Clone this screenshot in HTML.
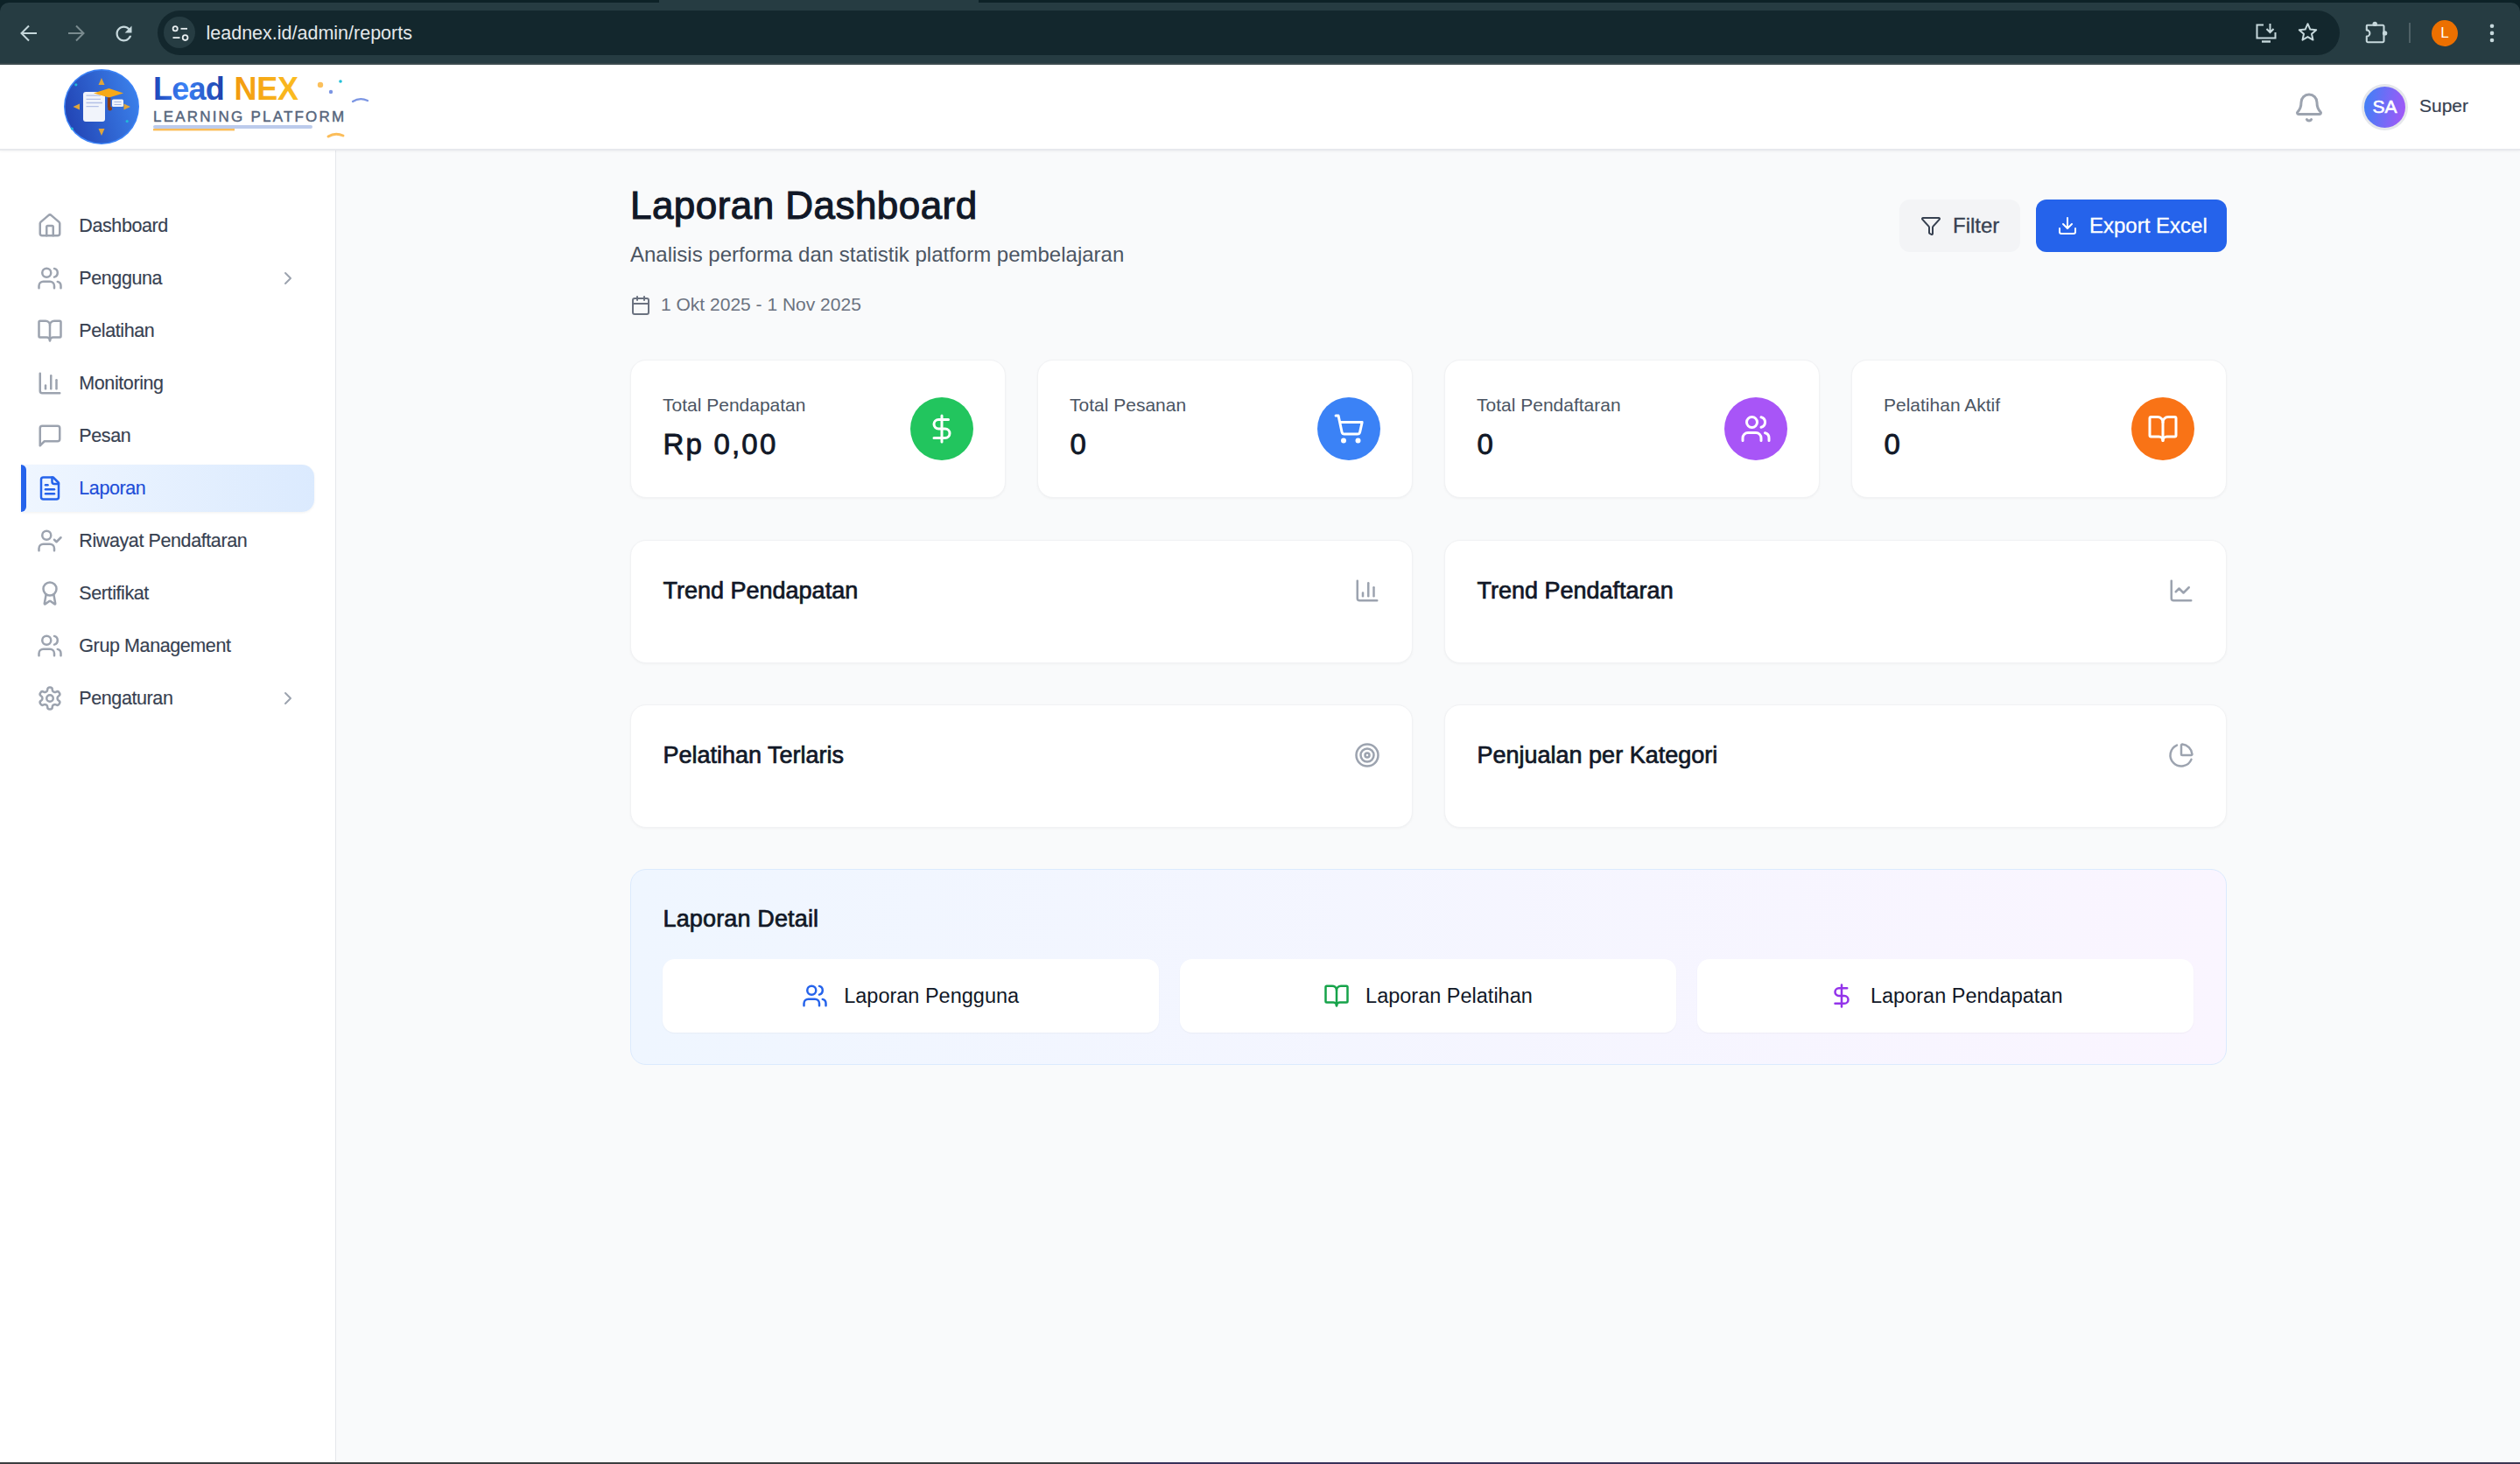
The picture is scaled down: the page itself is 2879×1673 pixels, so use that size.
<!DOCTYPE html>
<html><head><meta charset="utf-8">
<style>
*{box-sizing:border-box;margin:0;padding:0}
html,body{width:2879px;height:1673px;overflow:hidden}
body{position:relative;background:#f9fafb;font-family:"Liberation Sans",sans-serif;color:#111827}
.abs{position:absolute}
svg{display:block}
/* chrome */
#chrome{position:absolute;left:0;top:0;width:2879px;height:74px;background:#0d2227}
#toolbar{position:absolute;left:0;top:3px;width:2879px;height:69px;background:#263c42;border-radius:10px 10px 0 0}
#chline{position:absolute;left:0;top:72px;width:2879px;height:2px;background:#3a4a4e}
#tab{position:absolute;left:753px;top:0;width:365px;height:4px;background:#263c42}
#pill{position:absolute;left:180px;top:12px;width:2493px;height:51px;border-radius:25.5px;background:#13272d}
/* header */
#header{position:absolute;left:0;top:74px;width:2879px;height:98px;background:#fff;border-bottom:2px solid #e7e9ed;box-shadow:0 1px 3px rgba(0,0,0,0.05);z-index:2}
/* sidebar */
#side{position:absolute;left:0;top:172px;width:384px;height:1498px;background:#fff;border-right:1.5px solid #e5e7eb}
.nav{position:absolute;left:24px;width:335px;height:54px;font-size:21.5px;letter-spacing:-0.4px;color:#374151;-webkit-text-stroke:0.15px currentColor}
.nav .ic{position:absolute;left:17.5px;top:12px;width:30px;height:30px}
.nav .tx{position:absolute;left:66.3px;top:0;line-height:54px;white-space:nowrap}
.nav .chev{position:absolute;left:292.5px;top:15px;width:24px;height:24px}
.nav.act{background:linear-gradient(90deg,#eff6ff,#dbeafe);border-radius:0 14px 14px 0;color:#1d4ed8;box-shadow:0 1px 3px rgba(0,0,0,0.06)}
.nav.act:before{content:"";position:absolute;left:0;top:0;width:6px;height:54px;background:#2563eb;border-radius:0 6px 6px 0}
.card{position:absolute;background:#fff;border:1px solid #f1f2f4;border-radius:18px;box-shadow:0 1px 3px rgba(0,0,0,0.04)}
.btn{position:absolute;background:#fff;border-radius:14px;box-shadow:0 1px 2px rgba(0,0,0,0.04);display:flex;align-items:center;justify-content:center;font-size:23.5px;color:#111827;white-space:nowrap}
.btn svg{margin-right:18px}
#bottom{position:absolute;left:0;top:1670px;width:2879px;height:3px;background:linear-gradient(90deg,#3a3e3f 0,#3a3e3f 1240px,#36305a 1320px,#3b3652 100%);border-top:1px solid #fff}
</style></head>
<body>
<div id="chrome">
  <div id="tab"></div>
  <div id="toolbar"></div>
  <div id="chline"></div>
  <svg class="abs" style="left:20px;top:25px" width="26" height="26" viewBox="0 0 26 26"><path d="M22 13H6M13 4.5L4.5 13L13 21.5" fill="none" stroke="#c6d8dc" stroke-width="2"/></svg>
  <svg class="abs" style="left:74px;top:25px" width="26" height="26" viewBox="0 0 26 26"><path d="M4 13H20M13 4.5L21.5 13L13 21.5" fill="none" stroke="#7a8b8f" stroke-width="2"/></svg>
  <svg class="abs" style="left:127.5px;top:24.5px" width="27" height="27" viewBox="0 0 24 24"><path fill="#c6d8dc" d="M17.65 6.35C16.2 4.9 14.21 4 12 4c-4.42 0-7.99 3.58-7.99 8s3.57 8 7.99 8c3.73 0 6.84-2.55 7.73-6h-2.08c-.82 2.33-3.040 4-5.650 4-3.310 0-6-2.690-6-6s2.690-6 6-6c1.660 0 3.140.69 4.220 1.780L13 11h7V4l-2.35 2.35z"/></svg>
  <div id="pill"></div>
  <div class="abs" style="left:187px;top:19px;width:36px;height:36px;border-radius:18px;background:#263c42"></div>
  <svg class="abs" style="left:187px;top:19px" width="36" height="36" viewBox="0 0 36 36"><circle cx="13.2" cy="13.8" r="2.6" fill="none" stroke="#e8eef0" stroke-width="1.8"/><path d="M19.5 13.8H27" stroke="#e8eef0" stroke-width="1.8"/><path d="M10.5 24.1H18.5" stroke="#e8eef0" stroke-width="1.8"/><circle cx="24.6" cy="24.1" r="2.9" fill="none" stroke="#e8eef0" stroke-width="1.8"/></svg>
  <div class="abs" style="left:235.5px;top:24px;font-size:21.5px;line-height:28px;color:#e4e8ea;white-space:nowrap">leadnex.id/admin/reports</div>
  <svg class="abs" style="left:2574px;top:24px" width="30" height="28" viewBox="0 0 30 28"><path d="M12 4.5H4.5V19.5H25.5V13" fill="none" stroke="#c6d8dc" stroke-width="2"/><path d="M10 23.5H20" stroke="#c6d8dc" stroke-width="2.4"/><path d="M19.5 3V13M15.5 9L19.5 13L23.5 9" fill="none" stroke="#c6d8dc" stroke-width="2"/></svg>
  <svg class="abs" style="left:2622px;top:23px" width="30" height="28" viewBox="0 0 30 28"><path d="M14.5 4.2L17.3 10.6L24.2 11.2L19 15.8L20.5 22.6L14.5 19.1L8.5 22.6L10 15.8L4.8 11.2L11.7 10.6Z" fill="none" stroke="#c6d8dc" stroke-width="2" stroke-linejoin="round"/></svg>
  <svg class="abs" style="left:2698px;top:22px" width="32" height="30" viewBox="0 0 32 30"><path d="M6.5 6.8H24.3A1.2 1.2 0 0 1 25.5 8V24.8A1.4 1.4 0 0 1 24.1 26.2H7.2A1.4 1.4 0 0 1 5.8 24.8V19.6A3.6 3.6 0 0 0 5.8 12.4V7.5A0.7 0.7 0 0 1 6.5 6.8Z" fill="none" stroke="#c6d8dc" stroke-width="2.1" stroke-linejoin="round"/><circle cx="15.2" cy="5.4" r="2.7" fill="#c6d8dc"/><circle cx="26.6" cy="15.9" r="2.7" fill="#c6d8dc"/></svg>
  <div class="abs" style="left:2752px;top:26px;width:2px;height:23px;background:#4e6166"></div>
  <div class="abs" style="left:2778px;top:23px;width:30px;height:30px;border-radius:50%;background:#ec7000;color:#fff;font-size:17px;line-height:30px;text-align:center">L</div>
  <svg class="abs" style="left:2840px;top:24px" width="14" height="28" viewBox="0 0 14 28"><circle cx="7" cy="5.8" r="2.3" fill="#c6d8dc"/><circle cx="7" cy="13.9" r="2.3" fill="#c6d8dc"/><circle cx="7" cy="22" r="2.3" fill="#c6d8dc"/></svg>
</div>
<div id="header">
  <svg class="abs" style="left:70px;top:3px" width="92" height="92" viewBox="0 0 92 92">
    <defs><linearGradient id="lg1" x1="0" y1="0.65" x2="1" y2="0.35"><stop offset="0" stop-color="#2244b4"/><stop offset="1" stop-color="#3b80ea"/></linearGradient></defs>
    <circle cx="46" cy="45" r="43" fill="#3b82f6"/>
    <circle cx="46" cy="45" r="41.5" fill="url(#lg1)"/>
    <path d="M46 12L42.5 20H49.5Z" fill="#e0a53a"/>
    <path d="M46 78L42.5 70H49.5Z" fill="#e0a53a"/>
    <path d="M13.5 45L21 41.5V48.5Z" fill="#e0a53a"/>
    <path d="M79 45L71.5 41.5V48.5Z" fill="#e0a53a"/>
    <rect x="25" y="28" width="25" height="34" rx="3" fill="#f1f4fb"/>
    <path d="M28.5 32.1H45M28.5 36.3H45M28.5 40.5H47M28.5 44.7H42.7" stroke="#b3c0e6" stroke-width="1.3"/>
    <path d="M37 29.5L54.5 24L71 29.5L54.5 34.5Z" fill="#f7a918"/>
    <path d="M54.6 34.5V46" stroke="#8a3c12" stroke-width="3.6"/><circle cx="55.6" cy="47.2" r="2.4" fill="#8a3c12"/>
    <rect x="58" y="36.5" width="13" height="8.5" rx="1.5" fill="#eef2fb"/>
    <path d="M60.5 39.5H68.5M60.5 42.5H68.5" stroke="#a9b9e2" stroke-width="1.2"/>
    <circle cx="16.8" cy="19.8" r="1.6" fill="#22b8d8"/>
    <circle cx="75.2" cy="61.6" r="1.6" fill="#22b8d8"/>
    <circle cx="12.3" cy="70" r="1.6" fill="#22b8d8"/>
  </svg>
  <svg class="abs" style="left:170px;top:0px" width="260" height="96" viewBox="0 0 260 96">
    <defs>
      <linearGradient id="lg2" x1="0" y1="0" x2="1" y2="0"><stop offset="0" stop-color="#1d44b8"/><stop offset="0.45" stop-color="#3b82f6"/><stop offset="1" stop-color="#1e3faa"/></linearGradient>
      <linearGradient id="lg3" x1="0" y1="0" x2="1" y2="0"><stop offset="0" stop-color="#f29a0e"/><stop offset="1" stop-color="#fbbd22"/></linearGradient>
    </defs>
    <text x="5" y="40" font-family="Liberation Sans" font-weight="bold" font-size="36" letter-spacing="-0.8" fill="url(#lg2)">Lead</text>
    <text x="97.5" y="40" font-family="Liberation Sans" font-weight="bold" font-size="36" letter-spacing="-0.3" fill="url(#lg3)">NEX</text>
    <text x="5" y="65" font-family="Liberation Sans" font-size="17" letter-spacing="2.2" fill="#56657c" stroke="#56657c" stroke-width="0.45">LEARNING PLATFORM</text>
    <rect x="5" y="69" width="182" height="4" rx="2" fill="#bccbec"/>
    <rect x="5" y="73" width="93" height="2.4" fill="#fbbd5a"/>
    <circle cx="196" cy="23" r="3.2" fill="#fbc05c"/>
    <circle cx="219" cy="19" r="1.8" fill="#22c0d8"/>
    <circle cx="208" cy="31" r="2.2" fill="#7b95e3"/>
    <path d="M233 42Q241 37 250 41" fill="none" stroke="#7b95e3" stroke-width="2.2" stroke-linecap="round"/>
    <path d="M205 82Q213 77 222 81" fill="none" stroke="#fbbd5a" stroke-width="3" stroke-linecap="round"/>
  </svg>
  <svg class="abs" style="left:2619.5px;top:30.5px" width="36" height="36" viewBox="0 0 24 24" fill="none" stroke="#9ca3af" stroke-width="2" stroke-linecap="round" stroke-linejoin="round"><path d="M10.268 21a2 2 0 0 0 3.464 0"/><path d="M3.262 15.326A1 1 0 0 0 4 17h16a1 1 0 0 0 .74-1.673C19.41 13.956 18 12.499 18 8A6 6 0 0 0 6 8c0 4.499-1.411 5.956-2.738 7.326"/></svg>
  <div class="abs" style="left:2698px;top:22px;width:53px;height:53px;border-radius:50%;background:#e5e7eb"></div>
  <div class="abs" style="left:2701px;top:25px;width:47px;height:47px;border-radius:50%;background:linear-gradient(100deg,#3b82f6,#a855f7);color:#fff;font-size:21px;-webkit-text-stroke:0.6px #fff;line-height:46px;text-align:center">SA</div>
  <div class="abs" style="left:2764px;top:32px;font-size:21px;line-height:30px;color:#374151;-webkit-text-stroke:0.2px #374151">Super</div>
</div>
<div id="side"></div>
<div class="nav" style="top:231px"><svg class="ic" viewBox="0 0 24 24" fill="none" stroke="#9ca3af" stroke-width="2" stroke-linecap="round" stroke-linejoin="round"><path d="M15 21v-8a1 1 0 0 0-1-1h-4a1 1 0 0 0-1 1v8"/><path d="M3 10a2 2 0 0 1 .709-1.528l7-5.999a2 2 0 0 1 2.582 0l7 5.999A2 2 0 0 1 21 10v9a2 2 0 0 1-2 2H5a2 2 0 0 1-2-2z"/></svg><div class="tx">Dashboard</div></div>
<div class="nav" style="top:291px"><svg class="ic" viewBox="0 0 24 24" fill="none" stroke="#9ca3af" stroke-width="2" stroke-linecap="round" stroke-linejoin="round"><path d="M16 21v-2a4 4 0 0 0-4-4H6a4 4 0 0 0-4 4v2"/><circle cx="9" cy="7" r="4"/><path d="M22 21v-2a4 4 0 0 0-3-3.87"/><path d="M16 3.13a4 4 0 0 1 0 7.75"/></svg><div class="tx">Pengguna</div><svg class="chev" viewBox="0 0 24 24" fill="none" stroke="#9ca3af" stroke-width="2" stroke-linecap="round" stroke-linejoin="round"><path d="m9 18 6-6-6-6"/></svg></div>
<div class="nav" style="top:351px"><svg class="ic" viewBox="0 0 24 24" fill="none" stroke="#9ca3af" stroke-width="2" stroke-linecap="round" stroke-linejoin="round"><path d="M12 7v14"/><path d="M3 18a1 1 0 0 1-1-1V4a1 1 0 0 1 1-1h5a4 4 0 0 1 4 4 4 4 0 0 1 4-4h5a1 1 0 0 1 1 1v13a1 1 0 0 1-1 1h-6a3 3 0 0 0-3 3 3 3 0 0 0-3-3z"/></svg><div class="tx">Pelatihan</div></div>
<div class="nav" style="top:411px"><svg class="ic" viewBox="0 0 24 24" fill="none" stroke="#9ca3af" stroke-width="2" stroke-linecap="round" stroke-linejoin="round"><path d="M3 3v16a2 2 0 0 0 2 2h16"/><path d="M18 17V9"/><path d="M13 17V5"/><path d="M8 17v-3"/></svg><div class="tx">Monitoring</div></div>
<div class="nav" style="top:471px"><svg class="ic" viewBox="0 0 24 24" fill="none" stroke="#9ca3af" stroke-width="2" stroke-linecap="round" stroke-linejoin="round"><path d="M21 15a2 2 0 0 1-2 2H7l-4 4V5a2 2 0 0 1 2-2h14a2 2 0 0 1 2 2z"/></svg><div class="tx">Pesan</div></div>
<div class="nav act" style="top:531px"><svg class="ic" viewBox="0 0 24 24" fill="none" stroke="#2563eb" stroke-width="2" stroke-linecap="round" stroke-linejoin="round"><path d="M15 2H6a2 2 0 0 0-2 2v16a2 2 0 0 0 2 2h12a2 2 0 0 0 2-2V7Z"/><path d="M14 2v4a2 2 0 0 0 2 2h4"/><path d="M10 9H8"/><path d="M16 13H8"/><path d="M16 17H8"/></svg><div class="tx">Laporan</div></div>
<div class="nav" style="top:591px"><svg class="ic" viewBox="0 0 24 24" fill="none" stroke="#9ca3af" stroke-width="2" stroke-linecap="round" stroke-linejoin="round"><path d="M16 21v-2a4 4 0 0 0-4-4H6a4 4 0 0 0-4 4v2"/><circle cx="9" cy="7" r="4"/><polyline points="16 11 18 13 22 9"/></svg><div class="tx">Riwayat Pendaftaran</div></div>
<div class="nav" style="top:651px"><svg class="ic" viewBox="0 0 24 24" fill="none" stroke="#9ca3af" stroke-width="2" stroke-linecap="round" stroke-linejoin="round"><path d="m15.477 12.89 1.515 8.526a.5.5 0 0 1-.81.47l-3.58-2.687a1 1 0 0 0-1.197 0l-3.586 2.686a.5.5 0 0 1-.81-.469l1.514-8.526"/><circle cx="12" cy="8" r="6"/></svg><div class="tx">Sertifikat</div></div>
<div class="nav" style="top:711px"><svg class="ic" viewBox="0 0 24 24" fill="none" stroke="#9ca3af" stroke-width="2" stroke-linecap="round" stroke-linejoin="round"><path d="M16 21v-2a4 4 0 0 0-4-4H6a4 4 0 0 0-4 4v2"/><circle cx="9" cy="7" r="4"/><path d="M22 21v-2a4 4 0 0 0-3-3.87"/><path d="M16 3.13a4 4 0 0 1 0 7.75"/></svg><div class="tx">Grup Management</div></div>
<div class="nav" style="top:771px"><svg class="ic" viewBox="0 0 24 24" fill="none" stroke="#9ca3af" stroke-width="2" stroke-linecap="round" stroke-linejoin="round"><path d="M12.22 2h-.44a2 2 0 0 0-2 2v.18a2 2 0 0 1-1 1.73l-.43.25a2 2 0 0 1-2 0l-.15-.08a2 2 0 0 0-2.73.73l-.22.38a2 2 0 0 0 .73 2.73l.15.1a2 2 0 0 1 1 1.72v.51a2 2 0 0 1-1 1.74l-.15.09a2 2 0 0 0-.73 2.73l.22.38a2 2 0 0 0 2.730.73l.15-.08a2 2 0 0 1 2 0l.43.25a2 2 0 0 1 1 1.73V20a2 2 0 0 0 2 2h.44a2 2 0 0 0 2-2v-.18a2 2 0 0 1 1-1.73l.43-.25a2 2 0 0 1 2 0l.15.08a2 2 0 0 0 2.73-.73l.22-.39a2 2 0 0 0-.73-2.73l-.15-.08a2 2 0 0 1-1-1.74v-.5a2 2 0 0 1 1-1.74l.15-.09a2 2 0 0 0 .73-2.73l-.22-.38a2 2 0 0 0-2.73-.73l-.15.08a2 2 0 0 1-2 0l-.43-.25a2 2 0 0 1-1-1.73V4a2 2 0 0 0-2-2z"/><circle cx="12" cy="12" r="3"/></svg><div class="tx">Pengaturan</div><svg class="chev" viewBox="0 0 24 24" fill="none" stroke="#9ca3af" stroke-width="2" stroke-linecap="round" stroke-linejoin="round"><path d="m9 18 6-6-6-6"/></svg></div>
<div id="main">
<div class="abs" style="left:720px;top:208.75px;font-size:44px;line-height:52px;letter-spacing:0.45px;-webkit-text-stroke:1.1px #111827;color:#111827;white-space:nowrap">Laporan Dashboard</div>
<div class="abs" style="left:720px;top:275.68px;font-size:24px;line-height:30px;color:#4b5563;white-space:nowrap">Analisis performa dan statistik platform pembelajaran</div>
<svg class="abs" style="left:720px;top:336.5px" width="24" height="24" viewBox="0 0 24 24" fill="none" stroke="#6b7280" stroke-width="2" stroke-linecap="round" stroke-linejoin="round"><path d="M8 2v4"/><path d="M16 2v4"/><rect width="18" height="18" x="3" y="4" rx="2"/><path d="M3 10h18"/></svg>
<div class="abs" style="left:755px;top:334.72px;font-size:21px;line-height:26px;color:#6b7280;white-space:nowrap">1 Okt 2025 - 1 Nov 2025</div>
<div class="abs" style="left:2170px;top:228px;width:138px;height:60px;border-radius:12px;background:#f3f4f6"></div>
<svg class="abs" style="left:2194px;top:245.5px" width="24" height="24" viewBox="0 0 24 24" fill="none" stroke="#374151" stroke-width="2" stroke-linecap="round" stroke-linejoin="round"><path d="M10 20a1 1 0 0 0 .553.895l2 1A1 1 0 0 0 14 21v-7a2 2 0 0 1 .517-1.341L21.74 4.67A1 1 0 0 0 21 3H3a1 1 0 0 0-.742 1.67l7.225 7.989A2 2 0 0 1 10 14z"/></svg>
<div class="abs" style="left:2231px;top:243.08px;font-size:24px;line-height:30px;-webkit-text-stroke:0.3px #374151;color:#374151;white-space:nowrap">Filter</div>
<div class="abs" style="left:2326px;top:228px;width:218px;height:60px;border-radius:12px;background:#2563eb"></div>
<svg class="abs" style="left:2350px;top:246px" width="24" height="24" viewBox="0 0 24 24" fill="none" stroke="#ffffff" stroke-width="2" stroke-linecap="round" stroke-linejoin="round"><path d="M21 15v4a2 2 0 0 1-2 2H5a2 2 0 0 1-2-2v-4"/><polyline points="7 10 12 15 17 10"/><line x1="12" x2="12" y1="15" y2="3"/></svg>
<div class="abs" style="left:2387px;top:243.08px;font-size:24px;line-height:30px;-webkit-text-stroke:0.3px #fff;color:#ffffff;white-space:nowrap">Export Excel</div>
<div class="card" style="left:720px;top:411px;width:428.5px;height:158px"></div>
<div class="abs" style="left:757px;top:447.72px;font-size:21px;line-height:30px;color:#4b5563;white-space:nowrap">Total Pendapatan</div>
<div class="abs" style="left:757.5px;top:480.57px;font-size:33px;line-height:54px;letter-spacing:2.2px;-webkit-text-stroke:0.85px #111827;color:#111827;white-space:nowrap">Rp 0,00</div>
<div class="abs" style="left:1040px;top:454px;width:72px;height:72px;border-radius:50%;background:#22c55e"></div>
<svg class="abs" style="left:1058px;top:472px" width="36" height="36" viewBox="0 0 24 24" fill="none" stroke="#ffffff" stroke-width="2" stroke-linecap="round" stroke-linejoin="round"><line x1="12" x2="12" y1="2" y2="22"/><path d="M17 5H9.5a3.5 3.5 0 0 0 0 7h5a3.5 3.5 0 0 1 0 7H6"/></svg>
<div class="card" style="left:1185px;top:411px;width:428.5px;height:158px"></div>
<div class="abs" style="left:1222px;top:447.72px;font-size:21px;line-height:30px;color:#4b5563;white-space:nowrap">Total Pesanan</div>
<div class="abs" style="left:1222.5px;top:480.57px;font-size:33px;line-height:54px;letter-spacing:2.2px;-webkit-text-stroke:0.85px #111827;color:#111827;white-space:nowrap">0</div>
<div class="abs" style="left:1505px;top:454px;width:72px;height:72px;border-radius:50%;background:#3b82f6"></div>
<svg class="abs" style="left:1523px;top:472px" width="36" height="36" viewBox="0 0 24 24" fill="none" stroke="#ffffff" stroke-width="2" stroke-linecap="round" stroke-linejoin="round"><circle cx="8" cy="21" r="1"/><circle cx="19" cy="21" r="1"/><path d="M2.05 2.05h2l2.66 12.42a2 2 0 0 0 2 1.58h9.78a2 2 0 0 0 1.950-1.57l1.65-7.430H5.12"/></svg>
<div class="card" style="left:1650px;top:411px;width:428.5px;height:158px"></div>
<div class="abs" style="left:1687px;top:447.72px;font-size:21px;line-height:30px;color:#4b5563;white-space:nowrap">Total Pendaftaran</div>
<div class="abs" style="left:1687.5px;top:480.57px;font-size:33px;line-height:54px;letter-spacing:2.2px;-webkit-text-stroke:0.85px #111827;color:#111827;white-space:nowrap">0</div>
<div class="abs" style="left:1970px;top:454px;width:72px;height:72px;border-radius:50%;background:#a855f7"></div>
<svg class="abs" style="left:1988px;top:472px" width="36" height="36" viewBox="0 0 24 24" fill="none" stroke="#ffffff" stroke-width="2" stroke-linecap="round" stroke-linejoin="round"><path d="M16 21v-2a4 4 0 0 0-4-4H6a4 4 0 0 0-4 4v2"/><circle cx="9" cy="7" r="4"/><path d="M22 21v-2a4 4 0 0 0-3-3.87"/><path d="M16 3.13a4 4 0 0 1 0 7.75"/></svg>
<div class="card" style="left:2115px;top:411px;width:428.5px;height:158px"></div>
<div class="abs" style="left:2152px;top:447.72px;font-size:21px;line-height:30px;color:#4b5563;white-space:nowrap">Pelatihan Aktif</div>
<div class="abs" style="left:2152.5px;top:480.57px;font-size:33px;line-height:54px;letter-spacing:2.2px;-webkit-text-stroke:0.85px #111827;color:#111827;white-space:nowrap">0</div>
<div class="abs" style="left:2435px;top:454px;width:72px;height:72px;border-radius:50%;background:#f97316"></div>
<svg class="abs" style="left:2453px;top:472px" width="36" height="36" viewBox="0 0 24 24" fill="none" stroke="#ffffff" stroke-width="2" stroke-linecap="round" stroke-linejoin="round"><path d="M12 7v14"/><path d="M3 18a1 1 0 0 1-1-1V4a1 1 0 0 1 1-1h5a4 4 0 0 1 4 4 4 4 0 0 1 4-4h5a1 1 0 0 1 1 1v13a1 1 0 0 1-1 1h-6a3 3 0 0 0-3 3 3 3 0 0 0-3-3z"/></svg>
<div class="card" style="left:720px;top:617px;width:893.5px;height:141px"></div>
<div class="abs" style="left:757.5px;top:656.84px;font-size:27px;line-height:36px;letter-spacing:0px;-webkit-text-stroke:0.7px #111827;color:#111827;white-space:nowrap">Trend Pendapatan</div>
<svg class="abs" style="left:1547.0px;top:659.8px" width="30" height="30" viewBox="0 0 24 24" fill="none" stroke="#9ca3af" stroke-width="2" stroke-linecap="round" stroke-linejoin="round"><path d="M3 3v16a2 2 0 0 0 2 2h16"/><path d="M18 17V9"/><path d="M13 17V5"/><path d="M8 17v-3"/></svg>
<div class="card" style="left:1650px;top:617px;width:893.5px;height:141px"></div>
<div class="abs" style="left:1687.5px;top:656.84px;font-size:27px;line-height:36px;letter-spacing:0px;-webkit-text-stroke:0.7px #111827;color:#111827;white-space:nowrap">Trend Pendaftaran</div>
<svg class="abs" style="left:2476.5px;top:659.8px" width="30" height="30" viewBox="0 0 24 24" fill="none" stroke="#9ca3af" stroke-width="2" stroke-linecap="round" stroke-linejoin="round"><path d="M3 3v16a2 2 0 0 0 2 2h16"/><path d="m19 9-5 5-4-4-3 3"/></svg>
<div class="card" style="left:720px;top:805px;width:893.5px;height:141px"></div>
<div class="abs" style="left:757.5px;top:844.84px;font-size:27px;line-height:36px;letter-spacing:0px;-webkit-text-stroke:0.7px #111827;color:#111827;white-space:nowrap">Pelatihan Terlaris</div>
<svg class="abs" style="left:1547.0px;top:847.8px" width="30" height="30" viewBox="0 0 24 24" fill="none" stroke="#9ca3af" stroke-width="2" stroke-linecap="round" stroke-linejoin="round"><circle cx="12" cy="12" r="10"/><circle cx="12" cy="12" r="6"/><circle cx="12" cy="12" r="2"/></svg>
<div class="card" style="left:1650px;top:805px;width:893.5px;height:141px"></div>
<div class="abs" style="left:1687.5px;top:844.84px;font-size:27px;line-height:36px;letter-spacing:0px;-webkit-text-stroke:0.7px #111827;color:#111827;white-space:nowrap">Penjualan per Kategori</div>
<svg class="abs" style="left:2476.5px;top:847.8px" width="30" height="30" viewBox="0 0 24 24" fill="none" stroke="#9ca3af" stroke-width="2" stroke-linecap="round" stroke-linejoin="round"><path d="M21 12c.552 0 1.005-.449.95-.998a10 10 0 0 0-8.953-8.951c-.55-.055-.998.398-.998.95v8a1 1 0 0 0 1 1z"/><path d="M21.21 15.89A10 10 0 1 1 8 2.83"/></svg>
<div class="abs" style="left:720px;top:993px;width:1823.5px;height:224px;border-radius:18px;border:1.5px solid #dbeafe;background:linear-gradient(90deg,#eff6ff,#faf5ff)"></div>
<div class="abs" style="left:757.5px;top:1032.14px;font-size:27px;line-height:36px;letter-spacing:0.15px;-webkit-text-stroke:0.7px #111827;color:#111827;white-space:nowrap">Laporan Detail</div>
<div class="btn" style="left:756.5px;top:1096px;width:567.3px;height:84px"><svg width="30" height="30" viewBox="0 0 24 24" fill="none" stroke="#2563eb" stroke-width="2" stroke-linecap="round" stroke-linejoin="round"><path d="M16 21v-2a4 4 0 0 0-4-4H6a4 4 0 0 0-4 4v2"/><circle cx="9" cy="7" r="4"/><path d="M22 21v-2a4 4 0 0 0-3-3.87"/><path d="M16 3.13a4 4 0 0 1 0 7.75"/></svg><span>Laporan Pengguna</span></div>
<div class="btn" style="left:1347.8px;top:1096px;width:567.3px;height:84px"><svg width="30" height="30" viewBox="0 0 24 24" fill="none" stroke="#16a34a" stroke-width="2" stroke-linecap="round" stroke-linejoin="round"><path d="M12 7v14"/><path d="M3 18a1 1 0 0 1-1-1V4a1 1 0 0 1 1-1h5a4 4 0 0 1 4 4 4 4 0 0 1 4-4h5a1 1 0 0 1 1 1v13a1 1 0 0 1-1 1h-6a3 3 0 0 0-3 3 3 3 0 0 0-3-3z"/></svg><span>Laporan Pelatihan</span></div>
<div class="btn" style="left:1939.1px;top:1096px;width:567.3px;height:84px"><svg width="30" height="30" viewBox="0 0 24 24" fill="none" stroke="#9333ea" stroke-width="2" stroke-linecap="round" stroke-linejoin="round"><line x1="12" x2="12" y1="2" y2="22"/><path d="M17 5H9.5a3.5 3.5 0 0 0 0 7h5a3.5 3.5 0 0 1 0 7H6"/></svg><span>Laporan Pendapatan</span></div>
</div>
<div id="bottom"></div>
</body></html>
